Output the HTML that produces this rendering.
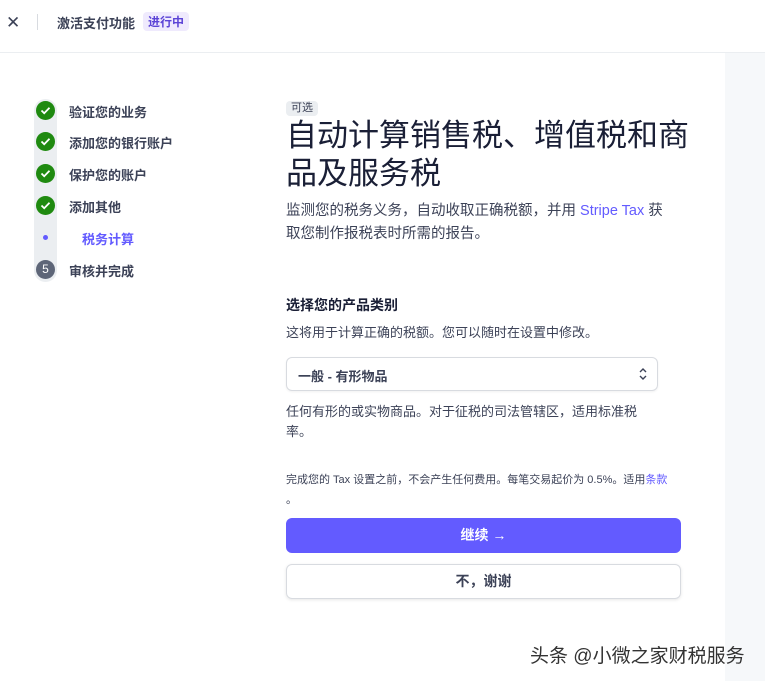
<!DOCTYPE html>
<html><head><meta charset="utf-8"><style>
*{margin:0;padding:0;box-sizing:border-box}
body{width:765px;height:681px;overflow:hidden;background:#fff;font-family:"Liberation Sans","Noto Sans CJK SC",sans-serif;color:#1a1f36;position:relative}
.a{position:absolute;white-space:nowrap}
.ck{position:absolute;left:36px;width:19px;height:19px;border-radius:50%;background:#1f8a10;}
.ck svg{position:absolute;left:4px;top:4px}
.st{position:absolute;left:69px;font-size:13px;font-weight:bold;color:#3c4257}
</style></head><body>
<div class="a" style="left:6px;top:13px;font-size:17px;color:#3c4257">✕</div>
<div class="a" style="left:37px;top:14px;width:1px;height:16px;background:#d8dbe0"></div>
<div class="a" style="left:57px;top:13px;font-size:13px;font-weight:bold;color:#3c4257">激活支付功能</div>
<div class="a" style="left:143px;top:12px;padding:1px 5px;font-size:12px;font-weight:bold;color:#5b44d6;background:#efeafd;border-radius:4px">进行中</div>
<div class="a" style="left:0;top:52px;width:765px;height:1px;background:#ebeef1"></div>
<div class="a" style="left:725px;top:53px;width:40px;height:628px;background:#f6f8fa"></div>

<div class="a" style="left:34px;top:99px;width:23px;height:183px;background:#ebeef1;border-radius:12px"></div>
<div class="ck" style="top:101px"><svg width="11" height="11" viewBox="0 0 11 11"><path d="M1.5 5.5l2.7 2.7 5.3-5.5" stroke="#fff" stroke-width="1.8" fill="none"/></svg></div>
<div class="ck" style="top:132px"><svg width="11" height="11" viewBox="0 0 11 11"><path d="M1.5 5.5l2.7 2.7 5.3-5.5" stroke="#fff" stroke-width="1.8" fill="none"/></svg></div>
<div class="ck" style="top:164px"><svg width="11" height="11" viewBox="0 0 11 11"><path d="M1.5 5.5l2.7 2.7 5.3-5.5" stroke="#fff" stroke-width="1.8" fill="none"/></svg></div>
<div class="ck" style="top:196px"><svg width="11" height="11" viewBox="0 0 11 11"><path d="M1.5 5.5l2.7 2.7 5.3-5.5" stroke="#fff" stroke-width="1.8" fill="none"/></svg></div>
<div class="a" style="left:43px;top:235px;width:5px;height:5px;border-radius:50%;background:#635bff"></div>
<div class="a" style="left:36px;top:260px;width:19px;height:19px;border-radius:50%;background:#5e6678;color:#fff;font-size:12px;text-align:center;line-height:19px">5</div>
<div class="st" style="top:102px">验证您的业务</div>
<div class="st" style="top:133px">添加您的银行账户</div>
<div class="st" style="top:165px">保护您的账户</div>
<div class="st" style="top:197px">添加其他</div>
<div class="st" style="top:229px;left:82px;color:#635bff">税务计算</div>
<div class="st" style="top:261px">审核并完成</div>

<div class="a" style="left:286px;top:101px;padding:0 5px;font-size:11px;line-height:15px;color:#3c4257;background:#ebeef1;border-radius:4px">可选</div>
<div class="a" style="left:286px;top:117px;font-size:31px;line-height:38px;color:#1a1f36;white-space:normal;width:410px">自动计算销售税、增值税和商品及服务税</div>
<div class="a" style="left:286px;top:200px;font-size:14.5px;line-height:23px;color:#3c4257">监测您的税务义务，自动收取正确税额，并用 <span style="color:#635bff">Stripe Tax</span> 获<br>取您制作报税表时所需的报告。</div>
<div class="a" style="left:286px;top:295px;font-size:14px;font-weight:bold;color:#1a1f36">选择您的产品类别</div>
<div class="a" style="left:286px;top:322px;font-size:13px;color:#3c4257">这将用于计算正确的税额。您可以随时在设置中修改。</div>
<div class="a" style="left:286px;top:357px;width:372px;height:34px;border:1px solid #d8dbe0;border-radius:6px;box-shadow:0 1px 2px rgba(0,0,0,.06)"></div>
<div class="a" style="left:298px;top:366px;font-size:13px;font-weight:bold;color:#3c4257">一般 - 有形物品</div>
<svg class="a" style="left:638px;top:366px" width="10" height="16" viewBox="0 0 10 16"><path d="M2 6l3-3 3 3M2 10l3 3 3-3" stroke="#3c4257" stroke-width="1.4" fill="none"/></svg>
<div class="a" style="left:286px;top:402px;font-size:13px;line-height:20px;color:#3c4257;white-space:normal;width:370px">任何有形的或实物商品。对于征税的司法管辖区，适用标准税率。</div>
<div class="a" style="left:286px;top:470px;font-size:11px;line-height:20px;color:#3c4257;white-space:normal;width:395px">完成您的 Tax 设置之前，不会产生任何费用。每笔交易起价为 0.5%。适用<span style="color:#635bff">条款</span><br>。</div>
<div class="a" style="left:286px;top:518px;width:395px;height:35px;background:#635bff;border-radius:6px;color:#fff;font-size:14px;font-weight:bold;text-align:center;line-height:35px">继续 →</div>
<div class="a" style="left:286px;top:564px;width:395px;height:35px;border:1px solid #d8dbe0;border-radius:6px;box-shadow:0 1px 3px rgba(0,0,0,.1);color:#3c4257;font-size:14px;font-weight:bold;text-align:center;line-height:33px">不，谢谢</div>
<div class="a" style="left:530px;top:641px;font-size:19px;color:#333">头条 @小微之家财税服务</div>
</body></html>
